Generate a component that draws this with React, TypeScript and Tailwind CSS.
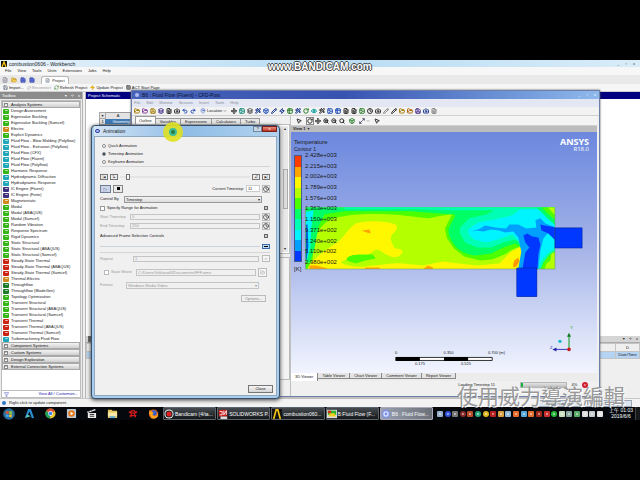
import {
  Box, Camera, ChevronDown, Clock, Eye, FileText, Filter, FolderOpen, Grid3x3, Image, Layers, MapPin, Maximize2,
  MousePointer2, Move, Pencil, Redo2, RefreshCw, RotateCw, Save, Search, Table2, Undo2, Wand2, Zap, ZoomIn, ZoomOut,
} from "lucide-react"
import type { ReactNode } from "react"

const GREEN = "bg-[#35b516]"
const CYAN = "bg-[#1fa6b8]"
const ORANGE = "bg-[#d08a1c]"
const RED = "bg-[#cc2413]"
const NAVY = "bg-[#3d2f7c]"
const LEAF = "bg-[#1c7a2a]"

const systems: [string, string][] = [
  ["Design Assessment", GREEN],
  ["Eigenvalue Buckling", GREEN],
  ["Eigenvalue Buckling (Samcef)", GREEN],
  ["Electric", ORANGE],
  ["Explicit Dynamics", GREEN],
  ["Fluid Flow - Blow Molding (Polyflow)", CYAN],
  ["Fluid Flow - Extrusion (Polyflow)", CYAN],
  ["Fluid Flow (CFX)", CYAN],
  ["Fluid Flow (Fluent)", CYAN],
  ["Fluid Flow (Polyflow)", CYAN],
  ["Harmonic Response", GREEN],
  ["Hydrodynamic Diffraction", CYAN],
  ["Hydrodynamic Response", CYAN],
  ["IC Engine (Fluent)", NAVY],
  ["IC Engine (Forte)", NAVY],
  ["Magnetostatic", ORANGE],
  ["Modal", GREEN],
  ["Modal (ABAQUS)", GREEN],
  ["Modal (Samcef)", GREEN],
  ["Random Vibration", GREEN],
  ["Response Spectrum", GREEN],
  ["Rigid Dynamics", GREEN],
  ["Static Structural", GREEN],
  ["Static Structural (ABAQUS)", GREEN],
  ["Static Structural (Samcef)", GREEN],
  ["Steady-State Thermal", RED],
  ["Steady-State Thermal (ABAQUS)", RED],
  ["Steady-State Thermal (Samcef)", RED],
  ["Thermal-Electric", ORANGE],
  ["Throughflow", LEAF],
  ["Throughflow (BladeGen)", LEAF],
  ["Topology Optimization", GREEN],
  ["Transient Structural", GREEN],
  ["Transient Structural (ABAQUS)", GREEN],
  ["Transient Structural (Samcef)", GREEN],
  ["Transient Thermal", RED],
  ["Transient Thermal (ABAQUS)", RED],
  ["Transient Thermal (Samcef)", RED],
  ["Turbomachinery Fluid Flow", CYAN],
]

const groups = ["Component Systems", "Custom Systems", "Design Exploration", "External Connection Systems"]

const legend = [
  "2.428e+003", "2.215e+003", "2.002e+003", "1.789e+003", "1.576e+003", "1.363e+003",
  "1.150e+003", "9.371e+002", "7.240e+002", "5.110e+002", "2.980e+002",
]

const legendColors = [
  "bg-[#ff3c00]", "bg-[#ffa500]", "bg-[#fff700]", "bg-[#b4ff00]", "bg-[#4cff00]",
  "bg-[#00ff64]", "bg-[#00ffb4]", "bg-[#00f4ff]", "bg-[#00a0ff]", "bg-[#0038ff]",
]

function GroupHeader({ title, open }: { title: string; open?: boolean }) {
  return (
    <button className="flex h-[7px] w-full shrink-0 items-center gap-[3px] border border-[#a9a9a9] bg-linear-to-b from-[#f4f4f4] to-[#cfcfcf] px-px">
      <span className="flex size-[4px] items-center justify-center border border-[#888] bg-white text-[3px] leading-none">{open ? "-" : "+"}</span>
      {title}
    </button>
  )
}

function Toolbox() {
  return (
    <aside className="flex w-[83px] shrink-0 flex-col border-r border-[#b5b5b5] bg-[#ececec]">
      <header className="flex h-[7px] items-center gap-[4px] bg-[#8b8b8b] px-[2px] text-white">
        <span className="flex-1">Toolbox</span>
        <span>▾</span>
        <span>⊹</span>
        <span>x</span>
      </header>
      <div className="mx-px mt-px flex min-h-0 flex-1 flex-col overflow-hidden border border-[#bdbdbd] bg-white">
        <GroupHeader title="Analysis Systems" open />
        <ul className="shrink-0">
          {systems.map(([name, color]) => (
            <li key={name} className="flex h-[6px] items-center gap-[2px] pl-px whitespace-nowrap">
              <span className={`flex h-[5px] w-[6px] items-center justify-center rounded-[1px] ${color}`}>
                <span className="h-[2px] w-[3px] rounded-full border-t border-white/70" />
              </span>
              {name}
            </li>
          ))}
        </ul>
        {groups.map((g) => (
          <GroupHeader key={g} title={g} />
        ))}
        <div className="flex-1" />
        <div className="flex h-[7px] shrink-0 items-center justify-between border-t border-[#bdbdbd] px-[2px] text-[#1c1ca8]">
          <Filter className="size-[5px]" />
          <a href="#customize">View All / Customize...</a>
        </div>
      </div>
    </aside>
  )
}

function Workbench() {
  return (
    <section className="flex h-full flex-col bg-[#f0f0f0]">
      <header className="flex h-[7px] shrink-0 items-center gap-[2px] bg-linear-to-r from-[#e8f2fb] via-[#b7dcf3] to-[#d9ecf8] px-px">
        <svg viewBox="0 0 6 6" className="size-[6px]">
          <rect width="6" height="6" fill="#111" />
          <path d="M1 6 3 1l2 5" fill="none" stroke="#ffc810" strokeWidth="1.3" />
        </svg>
        <h1 className="flex-1 text-[5px] leading-[6px]">combustion0606 - Workbench</h1>
        <div className="mr-1 flex gap-[6px] text-[#345]">
          <span>_</span>
          <span>▫</span>
          <span>x</span>
        </div>
      </header>
      <nav className="flex h-[8px] shrink-0 items-center gap-[6px] bg-[#f7f7f7] pl-[5px]">
        {["File", "View", "Tools", "Units", "Extensions", "Jobs", "Help"].map((m) => (
          <button key={m}>{m}</button>
        ))}
      </nav>
      <div className="flex h-[9px] shrink-0 items-end gap-[3px] bg-[#e9e9e9] pl-[2px]">
        <FileText className="mb-px size-[6px] text-[#667]" />
        <FolderOpen className="mb-px size-[6px] fill-[#f7d060] text-[#b88a10]" />
        <Save className="mb-px size-[6px] fill-[#6a7be0] text-[#2d3a9c]" />
        <Save className="mb-px size-[6px] fill-[#6a7be0] text-[#2d3a9c]" />
        <div className="ml-[3px] flex h-[8px] w-[28px] items-center justify-center gap-[2px] rounded-t-[3px] border border-b-0 border-[#b8b8b8] bg-white">
          <FileText className="size-[5px] text-[#567]" />
          Project
        </div>
      </div>
      <div className="flex h-[8px] shrink-0 items-center gap-[3px] border-b border-[#cfcfcf] bg-[#f6f6f6] pl-[3px]">
        <button className="flex items-center gap-px"><Save className="size-[5px] text-[#345]" />Import...</button>
        <button className="flex items-center gap-px text-[#999]" disabled><RefreshCw className="size-[4px]" />Reconnect</button>
        <button className="flex items-center gap-px"><RefreshCw className="size-[5px] text-[#2b7f2b]" />Refresh Project</button>
        <button className="flex items-center gap-px"><Zap className="size-[5px] fill-[#f6c400] text-[#c89000]" />Update Project</button>
        <button className="flex items-center gap-px"><Grid3x3 className="size-[5px]" />ACT Start Page</button>
      </div>
      <div className="flex min-h-0 flex-1">
        <Toolbox />
        <div className="ml-[2px] flex min-w-0 flex-1 flex-col border-l border-[#b5b5b5]">
          <div className="flex h-[7px] shrink-0 items-center bg-[#000080] px-[2px] text-white">Project Schematic</div>
          <div className="min-h-0 flex-1 bg-white pt-[13px] pl-[13px]">
            <table className="w-[32px] border-collapse border border-[#999]">
              <tbody>
                <tr className="h-[6px] bg-[#e3e3e3] leading-[5px]">
                  <td className="w-[6px] border border-[#aaa] text-center">▾</td>
                  <td className="text-center">A</td>
                </tr>
                <tr className="h-[6px] bg-[#3f7ab5] leading-[5px] text-white">
                  <td className="bg-[#e3e3e3] text-center text-black">1</td>
                  <td className="pl-[7px]">Geometry</td>
                </tr>
              </tbody>
            </table>
          </div>
          <div className="h-[62px] shrink-0 bg-[#efefef]">
            <div className="flex h-[7px] items-center justify-between border-b border-[#aaa] bg-[#d5d5d5] px-[2px]">
              <span className="w-[4px] overflow-hidden bg-[#666]">&nbsp;</span>
              <span className="flex gap-[4px]"><span>▾</span><span>⊹</span><span>x</span></span>
            </div>
            <table className="w-full border-collapse">
              <tbody>
                <tr className="h-[8px] leading-[6px]">
                  <td className="border border-[#c4c4c4]" />
                  <td className="w-[24px] border border-[#c4c4c4] text-center">D</td>
                </tr>
                <tr className="h-[7px] bg-[#b5d3f2] leading-[6px]">
                  <td className="border border-[#c4c4c4]" />
                  <td className="border border-[#c4c4c4] text-center whitespace-nowrap">Date/Time</td>
                </tr>
              </tbody>
            </table>
          </div>
        </div>
      </div>
      <footer className="flex h-[9px] shrink-0 items-center gap-[3px] border-t border-[#c8c8c8] bg-[#f3f3f3] px-[2px]">
        <span className="size-[4px] rounded-full bg-[#2f78c8]" />
        <span className="flex-1">Right-click to update component.</span>
        <button className="h-[7px] border border-[#9aa7b5] bg-[#dde6ee] px-[8px] leading-[5px]">Show Progress</button>
        <button className="mr-[6px] h-[7px] border border-[#9aa7b5] bg-[#dde6ee] px-[8px] leading-[5px]">Show Messages</button>
      </footer>
    </section>
  )
}

// contour plot, axis triad and scale bar share one drawing space
function ContourPlot() {
  return (
    <svg viewBox="292 132 304 240" className="absolute inset-0 size-full">
      <defs>
        <clipPath id="duct">
          <rect x="306" y="207" width="248.5" height="61.5" />
        </clipPath>
      </defs>
      <g clipPath="url(#duct)">
        <rect x="306" y="207" width="249" height="62" fill="#4cff00" />
        <path d="M312 269c1-9 2-16 2-24 3-14 9-23 20-27 14-4 34-5 52-4 14 0 28 3 44 4l8-2 14-2-7 14 2 10 7 10 10 8 16 4 12-1 12-5 8-5 8-3 5 4 3 8-1 11z" fill="#b4ff00" />
        <path d="M308 269c2-6 5-9 8-11 8-8 16-12 24-18 6-6 9-12 16-17 12-3 28-3 40 1 3 3 0 7-4 10-3 6 2 11 3 14 6 0 9 2 7 5-3 4-9 5-13 2-6-2-8-6-13-6-6 4-10 8-18 9-8 0-14 1-17 4 9 5 20 5 32 3 14-1 22-3 30-2l20 2 20-4 16 2 18 2 22-2 12-12 8-4 4 2 2 8-2 10-3 2z" fill="#fff700" />
        <path d="M347 258c3-4 10-4 16-4l10 0 3 4-10 2-10 3-9-3z" fill="#4cff00" />
        <path d="M362 230l8-1 1 4-4-1zM310 265l7 0 11 3-2 1h-16zM424 268l4-3 5 2v2h-9zM366 267h14v2h-16z" fill="#ffa500" />
        <path d="M513 264l1-4 4-3 1 4-3 5-3 1z" fill="#ff9800" />
        <path d="M306 207h249v7H452l-16-1-24-2H345l-20 3-6 12-4 22-5 14h-4z" fill="#00ff64" />
        <path d="M453 209h102v60H521l2-14-3-9-5-3-12 4-12 6-16 2c-9-1-16-5-21-11-6-9-6-13-5-17l6-11z" fill="#00ff64" />
        <path d="M460 227l9-9 18-4 10-6h52l6 6v55H521l2-14-2-11-6-5-12 3-12 5-14 0-12-5-5-9z" fill="#00ffb4" />
        <path d="M345 207h210v3H450l-30-1h-75z" fill="#00ffb4" />
        <path d="M468 229l10-7 18-3 16-4 8-6h18l10 8 7 8v28l-5 2-8 14h-20l2-14-4-13-8-8-14 5-12 3-12-3-5-5z" fill="#00f4ff" />
        <path d="M536 207h19v18l-8-7z" fill="#00ff64" />
        <path d="M541 207h14v13l-7-6z" fill="#4cff00" />
        <path d="M547 207h8v8z" fill="#b4ff00" />
        <path d="M538 269l3-9 7-8 7-5v22z" fill="#00ffb4" />
        <path d="M540 269l3-7 6-8 6-4v19z" fill="#4cff00" />
        <path d="M544 269l2-6 4-3 1-7 4-1v17z" fill="#b4ff00" />
        <path d="M480 228l5-3 10 2 11 1 3-4h9l8 4 10-1-1-7 5-2 5 5 10 4v9l-8-3-4 5-3 12-2 18h-20l3-17-3-14-5-6-8 1-6-2-8-1-8 2-6-1-6 1z" fill="#00a0ff" />
        <path d="M523 235l4-2 5 3 6 1 2 7-2 10-1 15h-15l3-17 4-5-4-5zM540 224l4 1 11 2v13l-7-7-7-3z" fill="#0038ff" />
        <path d="M306 212l8-2-2 16-1 20-3 12h-2z" fill="#00f4ff" />
        <path d="M306 224h2l1 22-2 14h-1z" fill="#0060d0" />
      </g>
      <path d="M306 207v61.500M306 268.500h249M554.500 207v61" fill="none" stroke="#6b9a78" strokeWidth=".6" />
      <g fill="#0038ff" stroke="#0020a0" strokeWidth=".6">
        <rect x="554.500" y="227.500" width="27" height="20" />
        <rect x="516.500" y="267.500" width="20" height="28.500" />
      </g>

      <g>
        <path d="M396 356.500h96v3h-96z" fill="#fff" stroke="#000" strokeWidth=".8" />
        <path d="M396 356h24v4h-24zM444 356h24v4h-24z" fill="#000" />
      </g>

      <g strokeWidth="1">
        <path d="M568.500 348v-13" stroke="#0a9a1a" />
        <path d="M566.500 336l2-4 2 4z" fill="#0a7a1a" />
        <path d="M568 348.500h-14" stroke="#3a3ac8" />
        <path d="M556 346.500l-4 2 4 2z" fill="#2424a0" />
        <circle cx="568.500" cy="348.500" r="1.800" fill="#d01818" />
        <circle cx="559.500" cy="340.500" r="1.700" fill="#18b8c8" />
      </g>
    </svg>
  )
}

function Tool({ children, color }: { children: ReactNode; color?: string }) {
  return <button className={`flex h-[7px] w-[8px] shrink-0 items-center justify-center [&>svg]:size-[6px] [&>svg]:stroke-4 ${color ?? "text-[#333]"}`}>{children}</button>
}

function MainToolbar() {
  return (
    <div className="flex h-[9px] shrink-0 items-center border-b border-[#d0d0d0] bg-[#f2f2f2] pl-px">
      <Tool color="text-[#a88412]"><FolderOpen /></Tool>
      <Tool color="text-[#8a4aa0]"><FolderOpen /></Tool>
      <Tool color="text-[#a88412]"><Save /></Tool>
      <Tool color="text-[#503a90]"><Layers /></Tool>
      <Tool><FileText /></Tool>
      <Tool><Camera /></Tool>
      <Tool color="text-[#2450b8]"><Undo2 /></Tool>
      <Tool color="text-[#2450b8]"><Redo2 /></Tool>
      <button className="mx-[3px] flex items-center gap-px"><MapPin className="size-[6px] text-[#2450b8]" />Location<ChevronDown className="size-[4px]" /></button>
      <Tool><Move /></Tool>
      <Tool color="text-[#138a7a]"><Image /></Tool>
      <Tool color="text-[#555]"><Layers /></Tool>
      <Tool color="text-[#1f3d90]"><Wand2 /></Tool>
      <Tool color="text-[#2450b8]"><Box /></Tool>
      <Tool color="text-[#1f3d90]"><Pencil /></Tool>
      <Tool color="text-[#1f3d90]"><Zap /></Tool>
      <Tool color="text-[#308030]"><Table2 /></Tool>
      <Tool color="text-[#1f3d90]"><Wand2 /></Tool>
      <Tool color="text-[#308030]"><RotateCw /></Tool>
      <Tool color="text-[#12a0a0]"><Eye /></Tool>
      <Tool><Wand2 /></Tool>
      <Tool color="text-[#2450b8]"><Image /></Tool>
      <Tool color="text-[#2450b8]"><Table2 /></Tool>
      <Tool><FileText /></Tool>
      <Tool><FileText /></Tool>
      <Tool color="text-[#308030]"><Image /></Tool>
      <Tool><Clock /></Tool>
      <Tool><Camera /></Tool>
      <Tool color="text-[#888]"><Pencil /></Tool>
      <Tool><Pencil /></Tool>
      <Tool color="text-[#a88412]"><FolderOpen /></Tool>
      <Tool color="text-[#b06a12]"><FolderOpen /></Tool>
      <Tool color="text-[#503a90]"><Save /></Tool>
      <Tool color="text-[#1f3d90]"><Camera /></Tool>
      <Tool color="text-[#888]"><FileText /></Tool>
    </div>
  )
}

function Viewer() {
  return (
    <div className="flex min-w-0 flex-1 flex-col pr-[2px]">
      <div className="flex h-[10px] shrink-0 items-center border-b border-[#d0d0d0] bg-[#f4f4f4] pl-[4px]">
        <Tool><MousePointer2 /></Tool>
        <span className="w-[3px]" />
        <span className="flex size-[8px] items-center justify-center border border-[#888] bg-white"><Tool><RotateCw /></Tool></span>
        <Tool><Move /></Tool>
        <Tool><ZoomIn /></Tool>
        <Tool><ZoomOut /></Tool>
        <Tool><Search /></Tool>
        <span className="w-[2px]" />
        <Tool color="text-[#308030]"><Box /></Tool>
        <span className="w-[2px]" />
        <Tool color="text-[#557]"><Maximize2 /></Tool>
        <ChevronDown className="size-[4px]" />
        <span className="w-[3px]" />
        <Tool><MousePointer2 /></Tool>
      </div>
      <div className="flex h-[6px] shrink-0 items-center gap-[2px] bg-[#bcbcbc] pl-[2px] font-bold">View 1 <span>▾</span></div>
      <div className="relative min-h-0 flex-1 bg-linear-to-b from-[#6c88de] via-[#a7b5e8] via-50% to-[#f2f5fe]">
        <ContourPlot />
        <div className="relative flex h-full flex-col">
          <div className="flex justify-between pt-[6px] pr-[8px] pl-[3px]">
            <div>
              <div className="text-[6px] leading-[8px]">Temperature</div>
              <div className="text-[5px] leading-[6px]">Contour 1</div>
            </div>
            <div className="text-right font-['Open_Sans',sans-serif] text-white">
              <div className="text-[9px] leading-[8px] font-bold">ANSYS</div>
              <div className="text-[6px] leading-[6px]">R18.0</div>
            </div>
          </div>
          <div className="flex h-[113px] gap-[3px] pl-[3px]">
            <div className="my-[3px] flex w-[8px] flex-col border border-[#4a5a8a]">
              {legendColors.map((c) => (
                <span key={c} className={`flex-1 ${c}`} />
              ))}
            </div>
            <div className="flex flex-col justify-between text-[6px] leading-[6px]">
              {legend.map((v) => (
                <span key={v}>{v}</span>
              ))}
            </div>
          </div>
          <div className="pl-[3px] text-[6px] leading-[8px]">[K]</div>
          <div className="flex-1" />
          <div className="mb-[6px] flex items-end justify-between pr-[22px] pl-[104px]">
            <div className="w-[110px]">
              <div className="flex justify-between leading-[6px]"><span>0</span><span className="pl-[12px]">0.350</span><span>0.700 (m)</span></div>
              <div className="flex gap-[36px] pt-[5px] pl-[20px] leading-[6px]"><span>0.175</span><span>0.525</span></div>
            </div>
            <div className="relative h-[48px] w-[30px]">
              <span className="absolute top-[6px] right-[2px] leading-[5px] text-[#0a9a1a]">Y</span>
              <span className="absolute top-[26px] left-[5px] leading-[5px] text-[#2424a0]">Z</span>
            </div>
          </div>
        </div>
      </div>
      <div className="flex h-[8px] shrink-0 bg-[#ececec]">
        {["3D Viewer", "Table Viewer", "Chart Viewer", "Comment Viewer", "Report Viewer"].map((t, i) => (
          <button key={t} className={i === 0 ? "border-r border-[#888] bg-white px-[4px]" : "mb-[2px] border-r border-b border-[#888] bg-[#e4e4e4] px-[4px] leading-[5px]"}>{t}</button>
        ))}
      </div>
      <div className="flex h-[15px] shrink-0 items-start justify-end gap-[3px] pt-px pr-[9px]">
        <span className="pr-[22px]">Loading Timestep 11</span>
        <div className="h-[6px] w-[47px] border border-[#b5b5b5] bg-linear-to-b from-[#e4e4e4] to-[#bdbdbd]"><div className="h-full w-[2px] bg-[#12b83c]" /></div>
        <span className="w-[9px] text-center">4%</span>
        <button className="flex size-[6px] items-center justify-center rounded-full bg-[#d01c2c] text-white">x</button>
      </div>
    </div>
  )
}

function CfdPost() {
  return (
    <section className="absolute top-[30px] right-[40px] bottom-[10px] left-[131px] flex flex-col border border-[#6d7ea8] bg-[#f0f0f0] shadow-[0_0_2px_#555]">
      <header className="flex h-[8px] shrink-0 items-center gap-[3px] bg-linear-to-r from-[#4763b8] via-[#3852b0] via-45% to-[#8fb9ec] px-[3px] text-[#0c1430]">
        <span className="size-[4px] rounded-full bg-[#aebcf4]" />
        <h2 className="flex-1 text-[5px]">B6 : Fluid Flow (Fluent) - CFD-Post</h2>
        <span className="flex gap-[6px] text-white"><span>_</span><span>▫</span><span>x</span></span>
      </header>
      <nav className="flex h-[8px] shrink-0 items-center gap-[6px] bg-[#e3e7f3] pl-[2px] text-[#8a8f9c]">
        {["File", "Edit", "Monitor", "Session", "Insert", "Tools", "Help"].map((m) => (
          <button key={m}>{m}</button>
        ))}
      </nav>
      <MainToolbar />
      <div className="flex min-h-0 flex-1">
        <div className="flex w-[159px] shrink-0 flex-col border-r border-[#c0c0c0]">
          <div className="flex h-[8px] items-end pl-[3px]">
            {["Outline", "Variables", "Expressions", "Calculators", "Turbo"].map((t, i) => (
              <button key={t} className={i === 0 ? "h-[8px] border border-b-0 border-[#999] bg-white px-[3px]" : "h-[6px] border border-b-0 border-l-0 border-[#999] bg-[#e6e6e6] px-[4px] leading-[5px]"}>{t}</button>
            ))}
          </div>
          <div className="flex h-[130px] border border-[#bbb] bg-white">
            <ul className="flex-1 pl-[9px]">
              <li className="leading-[5px]">▣ Cases</li>
            </ul>
            <div className="m-px flex w-[6px] flex-col items-center justify-between bg-[#e8e8e8]"><span>▴</span><span className="h-[40px] w-[5px] border border-[#aaa] bg-[#ddd]" /><span>▾</span></div>
          </div>
          <div className="mt-[3px] flex-1 border border-[#bbb] bg-[#f3f3f3]" />
          <div className="h-[16px]" />
        </div>
        <Viewer />
      </div>
    </section>
  )
}

function Spin({ disabled = false }: { disabled?: boolean }) {
  return <button aria-label="Pick timestep" disabled={disabled} className="flex size-[8px] shrink-0 items-center justify-center border border-[#bbb] bg-[#f6f6f6] text-[#333]"><Clock className="size-[6px] stroke-3" /></button>
}

function SmallButton({ children }: { children: ReactNode }) {
  return <button className="flex h-[6px] w-[8px] shrink-0 items-center justify-center border border-[#777] bg-[#eee] text-[3px] leading-none">{children}</button>
}

function AnimationDialog() {
  return (
    <section role="dialog" aria-labelledby="dlg-title" className="absolute top-[65px] bottom-[8px] left-[91px] flex w-[189px] flex-col rounded-[4px] border border-[#35506e] bg-[#a9cdea] px-[2px] pb-[2px] shadow-[0_1px_4px_#333]">
      <header className="flex h-[10px] shrink-0 items-center gap-[3px] bg-linear-to-r from-[#d4e5f5] via-[#8fbce6] to-[#b2d3ef] pl-px">
        <span className="h-[4px] w-[5px] rounded-full border border-[#3446a8] bg-[#a8b4f4]" />
        <h2 id="dlg-title" className="flex-1 text-[5px]">Animation</h2>
        <div className="flex self-start">
          <button className="h-[6px] w-[9px] border border-[#71889f] bg-[#c8d8e8] leading-[4px]">?</button>
          <button className="h-[6px] w-[15px] border border-[#7a2018] bg-linear-to-b from-[#e89080] to-[#c03020] leading-[4px] text-white">x</button>
        </div>
      </header>
      <div className="flex flex-1 flex-col border border-[#8fa9c2] bg-[#f0f0f0] pt-[5px] pr-[6px] pb-[2px] pl-[5px]">
        <fieldset className="border-b border-[#d5d5d5] pl-[2px]">
          {["Quick Animation", "Timestep Animation", "Keyframe Animation"].map((l, i) => (
            <label key={l} className="flex h-[8px] items-center gap-[2px]">
              <input type="radio" name="mode" defaultChecked={i === 1} className="size-[4px] appearance-none rounded-full border border-[#8a8a8a] bg-white checked:bg-[#27435e]" />
              {l}
            </label>
          ))}
        </fieldset>
        <div className="mt-[4px] flex h-[12px] items-center gap-[2px]">
          <SmallButton>|◀</SmallButton>
          <SmallButton>1▸</SmallButton>
          <input type="range" aria-label="Timestep position" min={0} max={250} defaultValue={11} className="h-[6px] min-w-0 flex-1 appearance-none bg-linear-to-b from-transparent from-40% via-[#aaa] via-50% to-transparent to-60% [&::-webkit-slider-thumb]:h-[6px] [&::-webkit-slider-thumb]:w-[4px] [&::-webkit-slider-thumb]:appearance-none [&::-webkit-slider-thumb]:border [&::-webkit-slider-thumb]:border-[#777] [&::-webkit-slider-thumb]:bg-[#f4f4f4]" />
          <SmallButton>◂2</SmallButton>
          <SmallButton>▶|</SmallButton>
        </div>
        <div className="flex h-[11px] items-center gap-[2px]">
          <button className="flex h-[8px] w-[11px] items-center justify-center border border-[#6a7d94] bg-[#ccd5e6] text-[5px] text-[#4a62a8]">▷</button>
          <button aria-label="Stop" className="flex h-[8px] w-[10px] items-center justify-center border border-[#888] bg-[#e8e8e8]"><span className="size-[3px] bg-black" /></button>
          <label htmlFor="current" className="ml-auto">Current Timestep:</label>
          <input id="current" defaultValue="11" className="h-[7px] w-[14px] border border-[#ccc] bg-white px-px" />
          <Spin />
        </div>
        <div className="flex h-[10px] items-center pr-[8px]">
          <label htmlFor="control" className="w-[24px]">Control By</label>
          <div className="relative flex-1">
            <select id="control" className="block h-[7px] w-full appearance-none border border-[#999] bg-linear-to-b from-[#f4f4f4] to-[#dcdcdc] px-px leading-[5px]"><option>Timestep</option></select>
            <span className="absolute top-0 right-[2px] leading-[7px]">▾</span>
          </div>
        </div>
        <div className="flex h-[8px] items-center justify-between">
          <label className="flex items-center gap-[2px]">
            <input type="checkbox" className="size-[5px] appearance-none border border-[#999] bg-white" />
            Specify Range for Animation
          </label>
          <button aria-label="Collapse range" className="mr-[2px] size-[4px] border border-[#666] bg-[#ccc]" />
        </div>
        <div className="flex h-[9px] items-center gap-[2px] text-[#999]">
          <label htmlFor="start" className="w-[28px] whitespace-nowrap">Start Timestep</label>
          <input id="start" disabled defaultValue="0" className="h-[6px] min-w-0 flex-1 border border-[#c4c4c4] px-px" />
          <Spin disabled />
        </div>
        <div className="flex h-[9px] items-center gap-[2px] text-[#999]">
          <label htmlFor="end" className="w-[28px] whitespace-nowrap">End Timestep</label>
          <input id="end" disabled defaultValue="250" className="h-[6px] min-w-0 flex-1 border border-[#c4c4c4] px-px" />
          <Spin disabled />
        </div>
        <div className="flex h-[12px] items-center justify-between">
          <span>Advanced Frame Selection Controls</span>
          <button aria-label="Collapse frame controls" className="mr-[2px] size-[4px] border border-[#666] bg-[#ccc]" />
        </div>
        <div className="flex h-[8px] items-center gap-[2px]">
          <span className="h-px flex-1 bg-[#ccd2da]" />
          <button aria-label="More" className="flex h-[5px] w-[8px] items-center justify-center border border-[#3a6ea8] bg-[#bcd8f2]"><span className="h-px w-[4px] bg-black" /></button>
        </div>
        <div className="mt-[2px] flex h-[12px] items-center gap-[3px] border-t border-[#d5d5d5] text-[#999]">
          <label htmlFor="repeat" className="w-[30px]">Repeat</label>
          <input id="repeat" disabled defaultValue="1" className="h-[6px] min-w-0 flex-1 border border-[#c4c4c4] px-px" />
          <button disabled className="h-[7px] w-[8px] border border-[#bbb] bg-[#f6f6f6] leading-[5px]">∞</button>
        </div>
        <div className="flex h-[14px] items-center gap-[2px] pt-[2px] pr-[3px] pl-[4px] text-[#999]">
          <label className="flex w-[30px] items-center gap-[2px] whitespace-nowrap">
            <input type="checkbox" disabled className="size-[5px] appearance-none border border-[#bbb] bg-white" />
            Save Movie
          </label>
          <input aria-label="Movie file" disabled defaultValue="C:/Users/Vskhead3/Documents/FFF.wmv" className="h-[7px] min-w-0 flex-1 border border-[#c4c4c4] px-px" />
          <button aria-label="Browse" disabled className="flex size-[9px] items-center justify-center border border-[#bbb] bg-[#f6f6f6]"><FolderOpen className="size-[5px]" /></button>
        </div>
        <div className="flex h-[14px] items-center pr-[11px] text-[#999]">
          <label htmlFor="format" className="w-[26px]">Format</label>
          <div className="relative flex-1">
            <select id="format" disabled className="block h-[7px] w-full appearance-none border border-[#c4c4c4] px-px leading-[5px]"><option>Windows Media Video</option></select>
            <span className="absolute top-0 right-[2px] leading-[7px]">▾</span>
          </div>
        </div>
        <button disabled className="mt-[3px] mr-[4px] h-[7px] w-[25px] self-end border border-[#bbb] leading-[5px] text-[#888]">Options...</button>
        <div className="flex-1" />
        <button className="mr-[-3px] h-[8px] w-[25px] self-end border border-[#777] bg-linear-to-b from-[#f6f6f6] to-[#d4d4d4] leading-[6px]">Close</button>
      </div>
    </section>
  )
}

// mouse position highlight with the busy ring in it
function Cursor() {
  return (
    <div className="absolute top-[62px] left-[163px] flex size-[20px] items-center justify-center rounded-full bg-[#e0e020]/90">
      <span className="size-[8px] rounded-full border-2 border-[#3cbf9a] bg-[#2a7a40]" />
    </div>
  )
}

function ChromeIcon() {
  return (
    <svg viewBox="0 0 12 12" className="size-[11px]">
      <circle cx="6" cy="6" r="5.500" fill="#e8c32c" />
      <path d="M6 6 1.200 3.200A5.500 5.500 0 0 1 10.800 3.300z" fill="#dd4b39" />
      <path d="M6 6 1.200 3.200A5.500 5.500 0 0 0 5.500 11.500z" fill="#1da35c" />
      <circle cx="6" cy="6" r="2.600" fill="#fff" />
      <circle cx="6" cy="6" r="2" fill="#4285f4" />
    </svg>
  )
}

const launchers: ReactNode[] = [
  <svg key="start" viewBox="0 0 12 12" className="size-[12px]">
    <circle cx="6" cy="6" r="5.800" fill="#2b6f9c" />
    <path d="M2.800 3.500 5.600 3v2.800H2.500z" fill="#e8562a" />
    <path d="M6.200 3 9.300 3.600 9 6H6.200z" fill="#8cc63f" />
    <path d="M2.500 6.400h3.100V9.200L3 8.600z" fill="#3fa9f5" />
    <path d="M6.200 6.500H9l-.5 2.700-2.300-.2z" fill="#fbc02d" />
  </svg>,
  <svg key="cad" viewBox="0 0 12 12" className="size-[11px]">
    <path d="M1 11 4.500 1h3L11 11H8.500L6 4 3.500 9z" fill="#2a8fd0" />
    <path d="M1 11 3.500 7l4 2z" fill="#5ec8c0" />
  </svg>,
  <ChromeIcon key="chrome" />,
  <svg key="player" viewBox="0 0 12 12" className="size-[11px]">
    <rect x="1" y="1" width="10" height="10" rx="1" fill="#b8c8d6" />
    <circle cx="6" cy="6" r="3.600" fill="#e87a1a" />
    <path d="M5 4v4l3-2z" fill="#fff" />
  </svg>,
  <svg key="clap" viewBox="0 0 12 12" className="size-[11px]">
    <path d="M1 4 10 1l.5 1.500L2 5.500zM2 5.500h9V11H2z" fill="#eee" />
    <path d="M3 3.500 4 5M6 2.500 7 4M4 7h5M4 9h5" stroke="#222" />
  </svg>,
  <svg key="folder" viewBox="0 0 12 12" className="size-[11px]">
    <path d="M1 2h4l1 1h5v8H1z" fill="#e8c860" />
    <path d="M1 5h10v4H1z" fill="#f8e8a8" />
    <path d="M3 9h6v2H3z" fill="#58a8d8" />
  </svg>,
  <svg key="red" viewBox="0 0 12 12" className="size-[10px]">
    <path d="M3 5a3 3 0 0 1 6 0M1 3l2 2M11 3 9 5M2 8h8M4 5h4v3H4zM3 10l1-2M9 10 8 8" fill="none" stroke="#d81c1c" strokeWidth="1.400" />
  </svg>,
  <svg key="fox" viewBox="0 0 12 12" className="size-[11px]">
    <circle cx="6" cy="6.500" r="5" fill="#f26a1b" />
    <circle cx="6.500" cy="5.500" r="3" fill="#3a5fc8" />
    <path d="M1 5 2 2l2 2 2 1-1 2 2 2 3-1 1-4 0 5-3 2.500-4 0z" fill="#fba31c" />
  </svg>,
]

const tasks: { label: string; icon: ReactNode }[] = [
  { label: "Bandicam (4/ta...", icon: <><circle cx="6" cy="6" r="5.500" fill="#eee" /><circle cx="6" cy="6" r="4.300" fill="#222" /><circle cx="6" cy="6" r="3" fill="#e02020" /></> },
  { label: "SOLIDWORKS P...", icon: <><path d="M1 1h10v8H1z" fill="#c81c1c" /><path d="M2 3h3v4H2M7 2v5l3-5v5" fill="none" stroke="#fff" /><path d="M3 9h8v3H3z" fill="#ddd" /></> },
  { label: "combustion060...", icon: <><path d="M0 0h12v12H0z" fill="#111" /><path d="M2 12 5 1l2 0 3 11" fill="none" stroke="#f4c414" strokeWidth="2" /></> },
  { label: "B:Fluid Flow (F...", icon: <><path d="M0 1h12v10H0z" fill="#ddd" /><path d="M1 2h10v5H1z" fill="#2cb82c" /><path d="M3 5h6l2 4H2z" fill="#f0d020" /><path d="M1 2h4v3H1z" fill="#d83020" /></> },
  { label: "B6 : Fluid Flow...", icon: <><circle cx="6" cy="6" r="5" fill="#7d92e6" /><circle cx="6" cy="6" r="2.500" fill="none" stroke="#dfe6ff" strokeWidth="1.500" /></> },
]

const trayColors = [
  "bg-[#9ab0c8]", "bg-[#3355dd] rounded-full", "bg-[#777]", "bg-[#8a2a2a] rounded-full", "bg-[#b84a2a]", "bg-[#28a87a] rounded-full",
  "bg-[#e0b820] rounded-full", "bg-[#b82020]", "bg-[#d8a040]", "bg-[#8fb8d8]", "bg-[#e86a2a]", "bg-[#58a8d8]",
  "bg-[#e07030]", "bg-[#a02818]", "bg-[#c83030]", "bg-[#28b838] rounded-full", "bg-[#c8e0c0]", "bg-[#88a8a0]",
  "bg-[#58a868]", "bg-[#ddd]", "bg-[#c8ccd0]", "bg-[#e4e4e4]",
]

function Taskbar() {
  return (
    <footer className="flex min-w-0 items-stretch bg-[#05090e] pl-[3px] text-[5px] text-white">
      <div className="flex w-[160px] shrink-0 items-center justify-between pr-[3px]">
        {launchers.map((icon, i) => (
          <button key={i} className="flex size-[12px] items-center justify-center">{icon}</button>
        ))}
      </div>
      <div className="flex min-w-0 flex-1 gap-px">
        {tasks.map((t, i) => (
          <button key={t.label} className={`flex min-w-0 flex-1 items-center gap-px overflow-hidden rounded-[1px] border whitespace-nowrap ${i === 4 ? "border-[#aab] bg-linear-to-r from-[#9aa0b0] to-[#6b7078]" : "border-[#5b6268] bg-linear-to-b from-[#454b50] to-[#15191c]"}`}>
            <svg viewBox="0 0 12 12" className="size-[10px] shrink-0">{t.icon}</svg>
            {t.label}
          </button>
        ))}
      </div>
      <div className="flex w-[174px] shrink-0 items-center justify-between px-[4px]">
        {trayColors.map((c, i) => (
          <span key={i} className={`flex size-[6px] items-center justify-center rounded-[1px] ${c}`}><span className="size-[2px] rounded-full bg-white/60" /></span>
        ))}
      </div>
      <div className="w-[28px] shrink-0 text-center font-['Liberation_Sans','Noto_Sans_CJK_TC',sans-serif] leading-[6px] whitespace-nowrap">
        <div>上午 01:03</div>
        <div>2019/6/6</div>
      </div>
      <div className="w-[5px] shrink-0 border-l border-[#444] bg-[#15191c]" />
    </footer>
  )
}

export default function App() {
  return (
    <div className="grid h-screen grid-cols-1 grid-rows-[60px_1fr_13px_60px] overflow-hidden bg-black font-['Liberation_Sans','DejaVu_Sans',sans-serif] text-[4px] leading-[6px] text-[#1a1a1a]">
      <div />
      <main className="relative min-h-0 min-w-0">
        <Workbench />
        <CfdPost />
        <AnimationDialog />
        <Cursor />
        <div className="absolute inset-x-0 top-px text-center text-[10px] leading-[11px] font-bold text-white [text-shadow:1px_0_#444,-1px_0_#444,0_1px_#444,0_-1px_#444]">
          www.BANDICAM.com
        </div>
        <div className="absolute right-[15px] bottom-0 font-['Noto_Sans_CJK_TC',sans-serif] text-[21px] leading-[24px] text-[#999] [text-shadow:1px_1px_#fff]">
          使用威力導演編輯
        </div>
      </main>
      <Taskbar />
      <div />
    </div>
  )
}
